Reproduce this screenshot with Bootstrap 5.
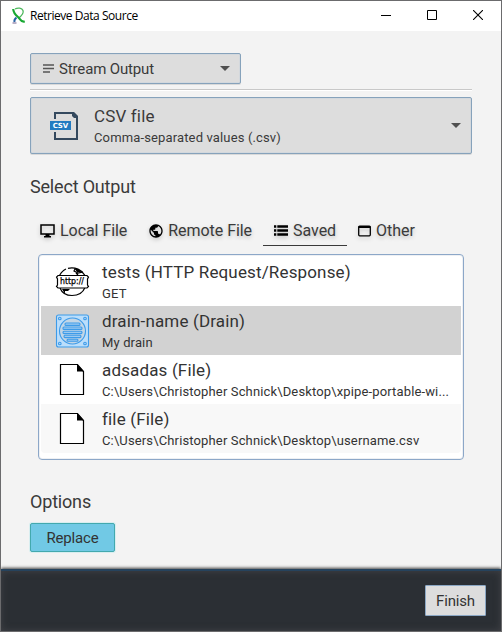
<!DOCTYPE html>
<html lang="en">
<head>
<meta charset="utf-8">
<meta name="viewport" content="width=device-width, initial-scale=1">
<title>Retrieve Data Source</title>
<link href="https://cdn.jsdelivr.net/npm/bootstrap@5.3.0/dist/css/bootstrap.min.css" rel="stylesheet">
<style>
body{font-family:Roboto,"Liberation Sans",sans-serif;color:#3a3a3a;background:#f3f3f3;line-height:1}
svg{display:block;flex:none}
.window{height:632px;border:1px solid #6b6b6d;background:#f3f3f3}
.titlebar{height:30px;background:#fff;padding-left:10px;color:#000}
.titlebar-text{font:12px/30px "Open Sans","Noto Sans",sans-serif;letter-spacing:-.46px;margin-left:3px}
.win-control{width:46px;height:28px}
.content-area{padding:22px 29px 0}
.combo{background:#ddd;border:1px solid #86a2bb;border-radius:2px;box-shadow:inset 0 0 0 1px #d3d8dd,0 1px 0 #d9d9d9}
.combo-type{width:211px;height:31px;padding:0 10px 0 12px;font-size:15px;letter-spacing:-.14px}
.combo-type span{padding-top:1px}
.combo-format{height:57px;padding:0 10px 0 19px;margin-top:7px}
.rule{height:1px;background:#c8c8c8;margin-top:5px;box-shadow:0 1px 0 #fff}
.name-line{font-size:17px;line-height:20px;letter-spacing:.15px}
.detail-line{font-size:13px;line-height:16px;letter-spacing:.14px}
.combo-label{margin-left:4px}
.section-title{font-size:18px;font-weight:400;line-height:22px;letter-spacing:-.18px;margin:22px 0 0}
.options-title{margin-top:31px}
.tabs{height:32px;margin:16px 0 0 -1px;font-size:16px}
.tabs .nav-link{color:#3a3a3a;padding:1px 11px 0;height:32px;letter-spacing:-.05px;gap:5px;text-shadow:0 2px 4px rgba(0,0,0,.22)}
.tabs svg{color:#000;filter:drop-shadow(0 2px 2px rgba(0,0,0,.2))}
.tabs .nav-link.current{border-bottom:1px solid #3a3a3a;padding-top:2px}
.source-list{margin:8px 8px 0;height:206px;border:1px solid #8ca7c8;border-radius:4px;background:#fff;padding:2px;box-shadow:inset 0 0 0 1px #eef0f3}
.source-row{height:49px;padding:0 8px 0 13px;border:0;border-radius:0;color:#333;background:#fff}
.source-row.chosen{background:#d2d2d2}
.source-row.alt{background:#f8f8f8}
.row-text{margin-left:12px;white-space:nowrap}
.btn-replace{width:85px;height:29px;margin-top:10px;padding:1px 0 0;border:1px solid #43a9ae;border-radius:2px;background:#71c9e5;color:#333;font-size:15px;line-height:26px;letter-spacing:-.15px;box-shadow:0 0 0 1px #d8eef0}
.footer-bar{height:62px;background:#2b2f34;border-top:2px solid #26435d;box-shadow:0 -1px 3px rgba(0,0,0,.75),inset 0 0 7px rgba(75,75,80,.7);padding:0 15px 2px 0}
.btn-finish{width:61px;height:31px;padding:1px 0 0;border:1px solid #8ba7c4;border-radius:1px;background:#ddd;color:#333;font-size:15px;line-height:28px;letter-spacing:-.15px}
</style>
<script src="https://cdn.jsdelivr.net/npm/bootstrap@5.3.0/dist/js/bootstrap.bundle.min.js"></script>
</head>
<body>
<div class="window d-flex flex-column overflow-hidden">
  <header class="titlebar d-flex">
    <svg class="align-self-center" width="16" height="18" viewBox="0 0 16 18" fill="none">
      <path d="M5.500 10.500C3.500 12 3 13 3.500 15" stroke="#2763a5" stroke-width="2"/>
      <path d="M1.500 16h4" stroke="#8a7aa0" stroke-width="1.200"/>
      <path d="M4 2C7 .3 11 1 12 3.500S10.500 9 7 11.500" stroke="#4cb75c" stroke-width="1.300"/>
      <path d="M2.200 2C2.500 6 4.500 8 7 10S9.500 15.500 13.800 14.500" stroke="#18a832" stroke-width="2.200"/>
    </svg>
    <span class="titlebar-text">Retrieve Data Source</span>
    <div class="d-flex ms-auto">
      <div class="win-control d-flex align-items-center justify-content-center"><svg width="10" height="10"><path d="M0 5.500h10" stroke="#000"/></svg></div>
      <div class="win-control d-flex align-items-center justify-content-center"><svg width="10" height="10"><path d="M.5.5h9v9h-9z" fill="none" stroke="#000"/></svg></div>
      <div class="win-control d-flex align-items-center justify-content-center"><svg width="10" height="10"><path d="M0 0l10 10M10 0L0 10" stroke="#000" stroke-width="1.100"/></svg></div>
    </div>
  </header>

  <main class="content-area flex-grow-1">
    <div class="combo combo-type d-flex align-items-center">
      <svg width="12" height="9" viewBox="0 0 12 9"><path d="M0 1h11M0 4.500h11M0 8h7" stroke="#555" stroke-width="1.300"/></svg>
      <span class="combo-label">Stream Output</span>
      <svg class="ms-auto" width="10" height="5"><path d="M0 0h10L5 5z" fill="#505050"/></svg>
    </div>
    <div class="rule"></div>
    <div class="combo combo-format d-flex align-items-center">
      <svg width="28" height="30" viewBox="0 0 28 30">
        <path d="M5 8V2h18l4 4v22H5v-7" fill="none" stroke="#34495e" stroke-width="2"/>
        <path d="M22 1h2l4 4v2h-4l-2-2z" fill="#34495e"/>
        <path d="M0 10h21v9H0z" fill="#237bc1"/>
        <text x="2.700" y="17.200" font-family="DejaVu Sans" font-weight="bold" font-size="7" textLength="15.500" fill="#fff">CSV</text>
      </svg>
      <div class="ms-3">
        <div class="name-line">CSV file</div>
        <div class="detail-line mt-1">Comma-separated values (.csv)</div>
      </div>
      <svg class="ms-auto" width="10" height="5"><path d="M0 0h10L5 5z" fill="#505050"/></svg>
    </div>

    <h2 class="section-title">Select Output</h2>

    <nav class="nav tabs flex-nowrap">
      <a class="nav-link d-flex align-items-center" href="#"><svg width="15" height="14" viewBox="0 0 15 14"><path d="M1 1h13v9H1z" fill="none" stroke="currentColor" stroke-width="1.500"/><path d="M5.500 10h4v2H11v1.500H4V12h1.500z" fill="currentColor"/></svg><span>Local File</span></a>
      <a class="nav-link d-flex align-items-center" href="#"><svg width="14" height="14" viewBox="1.500 1.500 21 21"><path fill="currentColor" d="M12 2C6.480 2 2 6.480 2 12s4.480 10 10 10 10-4.480 10-10S17.520 2 12 2zm-1 17.930c-3.950-.49-7-3.850-7-7.930 0-.62.08-1.210.21-1.790L9 15v1c0 1.100.9 2 2 2v1.930zm6.900-2.540c-.26-.81-1-1.390-1.900-1.390h-1v-3c0-.55-.45-1-1-1H8v-2h2c.55 0 1-.45 1-1V7h2c1.100 0 2-.9 2-2v-.41c2.930 1.190 5 4.060 5 7.410 0 2.080-.8 3.970-2.100 5.390z"/></svg><span>Remote File</span></a>
      <a class="nav-link current d-flex align-items-center" href="#"><svg width="14" height="11" viewBox="0 0 14 11"><path d="M0 1.500h2.300M3.300 1.500H14M0 5.500h2.300M3.300 5.500H14M0 9.500h2.300M3.300 9.500H14" stroke="currentColor" stroke-width="2.700"/></svg><span>Saved</span></a>
      <a class="nav-link d-flex align-items-center" href="#"><svg width="13" height="12" viewBox="0 0 13 12"><rect x=".7" y="1.200" width="11.600" height="9.600" rx="1" fill="none" stroke="currentColor" stroke-width="1.300"/><path d="M.5 1h12v2H.5z" fill="currentColor"/></svg><span>Other</span></a>
    </nav>

    <div class="source-list list-group">
      <div class="source-row list-group-item d-flex align-items-center">
        <svg width="36" height="34" viewBox="0 0 36 34" fill="none" stroke="#000" stroke-width="1.200">
          <path d="M5.500 10.500C7.500 7 9.500 5 12 4M14 3.300C21 1.500 28 5 31 10.500M6 23C8 28 13 30.500 18 30.500c6 0 11-3 13-8"/>
          <path d="M21 4l-1 2 4 2 5-1M22 8l2 2" />
          <path d="M20 3l5 1.500 3 3-5-.5zM8 24h8l-2 2h-3v3z" fill="#000" stroke="none"/>
          <path d="M4 10.500h29l1.500 1.500-1 2v6l1 1.500-1.500 1.500H4L2.500 21.500l1-1.500v-6l-1-2z" fill="#fff"/>
          <text x="6" y="19" font-family="DejaVu Sans" font-size="8.500" textLength="24" lengthAdjust="spacingAndGlyphs" fill="#000" stroke="#000" stroke-width=".25">http://</text>
        </svg>
        <div class="row-text"><div class="name-line">tests (HTTP Request/Response)</div><div class="detail-line mt-1">GET</div></div>
      </div>
      <div class="source-row chosen list-group-item d-flex align-items-center">
        <svg width="36" height="34" viewBox="0 0 36 34" fill="none" stroke="#3d9be9" stroke-width="1.100">
          <rect x="2.500" y="1" width="32" height="32" rx="2" fill="#bbdefb"/>
          <circle cx="18.500" cy="17" r="13" fill="#c3d6e6"/>
          <g fill="#9dcaf0"><rect x="11" y="9" width="15" height="2.400" rx="1"/><rect x="9" y="13" width="19" height="2.400" rx="1"/><rect x="9" y="17.200" width="19" height="2.400" rx="1"/><rect x="10" y="21.200" width="17" height="2.400" rx="1"/><rect x="13" y="25.200" width="11" height="2" rx="1"/></g>
          <circle cx="5.800" cy="4.500" r="1.300"/><circle cx="31" cy="4.500" r="1.300"/><circle cx="5.800" cy="29.500" r="1.300"/><circle cx="31" cy="29.500" r="1.300"/>
        </svg>
        <div class="row-text"><div class="name-line">drain-name (Drain)</div><div class="detail-line mt-1">My drain</div></div>
      </div>
      <div class="source-row list-group-item d-flex align-items-center">
        <svg width="36" height="34" viewBox="0 0 36 34"><path d="M6.500 1.500h17l6 7v23h-23z" fill="#fff" stroke="#000" stroke-width="1.200"/><path d="M23 1l7 7.500h-7z"/></svg>
        <div class="row-text"><div class="name-line">adsadas (File)</div><div class="detail-line mt-1">C:\Users\Christopher Schnick\Desktop\xpipe-portable-wi...</div></div>
      </div>
      <div class="source-row alt list-group-item d-flex align-items-center">
        <svg width="36" height="34" viewBox="0 0 36 34"><path d="M6.500 1.500h17l6 7v23h-23z" fill="#fff" stroke="#000" stroke-width="1.200"/><path d="M23 1l7 7.500h-7z"/></svg>
        <div class="row-text"><div class="name-line">file (File)</div><div class="detail-line mt-1">C:\Users\Christopher Schnick\Desktop\username.csv</div></div>
      </div>
    </div>

    <h2 class="section-title options-title">Options</h2>
    <button type="button" class="btn btn-replace d-block">Replace</button>
  </main>

  <footer class="footer-bar d-flex align-items-center justify-content-end">
    <button type="button" class="btn btn-finish">Finish</button>
  </footer>
</div>
</body>
</html>
